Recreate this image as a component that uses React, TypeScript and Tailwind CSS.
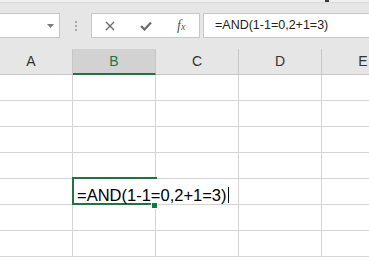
import React from 'react';

const cols = ['A', 'B', 'C', 'D', 'E'];
const rows = [1, 2, 3, 4, 5, 6, 7];

export default function App() {
  return (
    <div className="w-[369px] h-[261px] overflow-hidden bg-white font-['Liberation_Sans',Arial,sans-serif] relative">
      {/* barra de fórmulas */}
      <div className="h-[49px] bg-[#e6e6e6] relative">
        <div className="h-[3px] bg-[#efefef] border-b border-[#dadada]" />
        <div className="absolute left-[325px] top-0 w-[4px] h-[2px] bg-[#3a3a3a]" />
        <div className="flex items-start mt-[10px] h-[25px]">
          <div className="ml-[-10px] w-[70px] h-[25px] shrink-0 bg-white border border-[#c6c6c6] flex items-center justify-end pr-[5px]">
            <svg width="7" height="4" viewBox="0 0 7 4">
              <path d="M0 0 H7 L3.5 4 Z" fill="#7a7a7a" />
            </svg>
          </div>
          <div className="ml-[15px] w-[2px] shrink-0 flex flex-col gap-[2px] mt-[8px]">
            <div className="w-[2px] h-[2px] bg-[#a9a9a9]" />
            <div className="w-[2px] h-[2px] bg-[#a9a9a9]" />
            <div className="w-[2px] h-[2px] bg-[#a9a9a9]" />
          </div>
          <div className="ml-[14px] w-[109px] h-[25px] shrink-0 bg-white border border-[#c6c6c6] flex items-center">
            <div className="w-[36px] flex justify-center">
              <svg width="10" height="10" viewBox="0 0 10 10">
                <path d="M1 1 L9 9 M9 1 L1 9" stroke="#6b6b6b" strokeWidth="1.4" />
              </svg>
            </div>
            <div className="w-[36px] flex justify-center">
              <svg width="12" height="10" viewBox="0 0 12 10">
                <path d="M1 5 L4.5 8.5 L11 1.5" stroke="#6b6b6b" strokeWidth="2.2" fill="none" />
              </svg>
            </div>
            <div className="w-[36px] flex justify-center">
              <span className="font-['Liberation_Serif',serif] italic text-[14px] text-[#555] leading-none">
                f<span className="text-[10px]">x</span>
              </span>
            </div>
          </div>
          <div className="ml-[3px] flex-1 mr-[-2px] h-[25px] bg-white border border-[#c6c6c6] flex items-center pl-[11px] text-[12.5px] text-[#222] whitespace-nowrap">
            =AND(1-1=0,2+1=3)
          </div>
        </div>
      </div>

      {/* cabeçalho das colunas */}
      <div className="flex h-[26px] bg-[#e6e6e6]">
        {cols.map((c, i) => (
          <div
            key={c}
            className={`w-[83px] shrink-0 flex items-center justify-center text-[14px] ${i === 0 ? 'ml-[-10px]' : ''} ${
              c === 'B'
                ? 'bg-[#d2d2d2] border-b-2 border-b-[#217346] text-[#217346] border-r border-r-[#c6c6c6]'
                : 'border-r border-b border-[#c6c6c6] text-[#333]'
            }`}
          >
            {c}
          </div>
        ))}
      </div>

      {/* grade */}
      <div className="relative">
        {rows.map((r) => (
          <div key={r} className="flex h-[26px]">
            {cols.map((c, i) => {
              const editing = r === 5 && c === 'B';
              return (
                <div
                  key={c}
                  className={`w-[83px] shrink-0 border-b border-[#d4d4d4] ${i === 0 ? 'ml-[-10px]' : ''} ${
                    editing ? 'border-r border-r-transparent relative' : 'border-r'
                  }`}
                >
                  {editing && (
                    <div className="flex items-start pt-[8px] pl-[4px] whitespace-nowrap relative z-10">
                      <span className="text-[16.5px] leading-[16px] text-black">=AND(1-1=0,2+1=3)</span>
                      <span className="block ml-[1px] w-[1px] h-[16px] bg-black shrink-0" />
                    </div>
                  )}
                </div>
              );
            })}
          </div>
        ))}
        {/* célula ativa */}
        <div className="absolute left-[72px] top-[102px] w-[85px] h-[28px] border-l-2 border-t-2 border-b-2 border-[#217346] pointer-events-none" />
        <div className="absolute left-[151px] top-[127px] w-[7px] h-[7px] bg-[#217346] border border-white" />
      </div>
    </div>
  );
}
